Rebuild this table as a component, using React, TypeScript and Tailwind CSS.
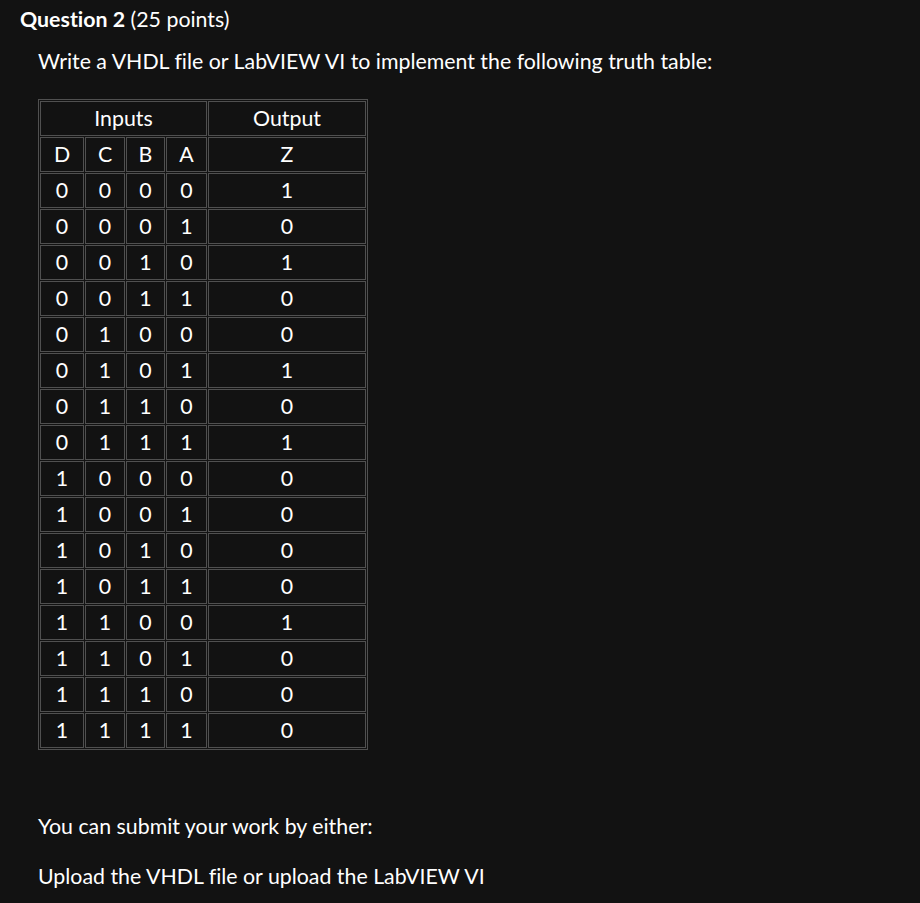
import React from "react";

const rows: number[][] = [
  [0, 0, 0, 0, 1],
  [0, 0, 0, 1, 0],
  [0, 0, 1, 0, 1],
  [0, 0, 1, 1, 0],
  [0, 1, 0, 0, 0],
  [0, 1, 0, 1, 1],
  [0, 1, 1, 0, 0],
  [0, 1, 1, 1, 1],
  [1, 0, 0, 0, 0],
  [1, 0, 0, 1, 0],
  [1, 0, 1, 0, 0],
  [1, 0, 1, 1, 0],
  [1, 1, 0, 0, 1],
  [1, 1, 0, 1, 0],
  [1, 1, 1, 0, 0],
  [1, 1, 1, 1, 0],
];

const cell = "border border-[#505050] h-[35px] p-0 text-center align-middle";

export default function App() {
  return (
    <div
      className="w-[920px] h-[903px] bg-[#121212] text-white overflow-hidden [font-variant-ligatures:none]"
      style={{ fontFamily: "Lato, 'Noto Sans', sans-serif" }}
    >
      <div className="pl-[20px] pt-[5px] text-[21.33px] leading-[28px]">
        <span className="font-bold">Question 2</span> (25 points)
      </div>
      <div className="pl-[38px]">
        <p className="mt-[14px] text-[21.33px] leading-[28px]">
          Write a VHDL file or LabVIEW VI to implement the following truth table:
        </p>
        <table className="mt-[24px] table-fixed border-separate border-spacing-[1px] border border-[#505050] text-[21.33px] w-[330px]">
          <colgroup>
            <col className="w-[44px]" />
            <col className="w-[40px]" />
            <col className="w-[39px]" />
            <col className="w-[41px]" />
            <col className="w-[158px]" />
          </colgroup>
          <tbody>
            <tr>
              <td colSpan={4} className={cell}>Inputs</td>
              <td className={cell}>Output</td>
            </tr>
            <tr>
              <td className={cell}>D</td>
              <td className={cell}>C</td>
              <td className={cell}>B</td>
              <td className={cell}>A</td>
              <td className={cell}>Z</td>
            </tr>
            {rows.map((r, i) => (
              <tr key={i}>
                {r.map((v, j) => (
                  <td key={j} className={cell}>{v}</td>
                ))}
              </tr>
            ))}
          </tbody>
        </table>
        <p className="mt-[62px] text-[21.33px] leading-[28px]">You can submit your work by either:</p>
        <p className="mt-[22px] text-[21.33px] leading-[28px]">Upload the VHDL file or upload the LabVIEW VI</p>
      </div>
    </div>
  );
}
